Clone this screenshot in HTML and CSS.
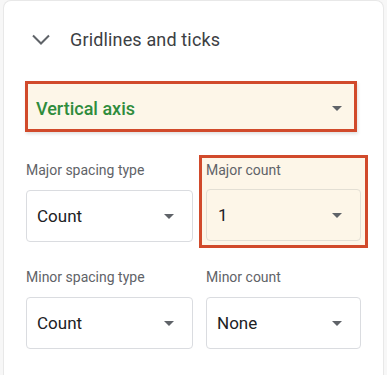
FILE: index.html
```html
<!DOCTYPE html>
<html lang="en">
<head>
    <meta charset="UTF-8">
    <title>Gridlines and ticks</title>
    <link rel="stylesheet" href="styles.css">
</head>
<body>
    <div class="card">
        <div class="header">
            <svg class="chevron" width="18" height="11" viewBox="0 0 18 11">
                <polyline points="1,1.5 9,9.5 17,1.5" fill="none" stroke="#5f6368" stroke-width="2"/>
            </svg>
            <span class="title">Gridlines and ticks</span>
        </div>

        <div class="axis-select">
            <span class="axis-label">Vertical axis</span>
            <span class="arrow"></span>
        </div>

        <div class="fields">
            <div class="field">
                <div class="label">Major spacing type</div>
                <div class="select">
                    <span>Count</span>
                    <span class="arrow"></span>
                </div>
            </div>
            <div class="field highlight">
                <div class="label">Major count</div>
                <div class="select">
                    <span>1</span>
                    <span class="arrow"></span>
                </div>
            </div>
            <div class="field">
                <div class="label">Minor spacing type</div>
                <div class="select">
                    <span>Count</span>
                    <span class="arrow"></span>
                </div>
            </div>
            <div class="field">
                <div class="label">Minor count</div>
                <div class="select">
                    <span>None</span>
                    <span class="arrow"></span>
                </div>
            </div>
        </div>
    </div>
</body>
</html>
```

FILE: styles.css
```css
* {
    margin: 0;
    padding: 0;
    box-sizing: border-box;
}

body {
    font-family: Roboto, 'Liberation Sans', Arial, sans-serif;
    background: #f7f7f7;
    overflow: hidden;
}

.card {
    margin-left: 3px;
    width: 381px;
    height: 100vh;
    background: #fff;
    border: 1px solid #e8e8e8;
    border-bottom: none;
    border-radius: 8px 8px 0 0;
}

.header {
    display: flex;
    align-items: center;
    height: 76px;
    padding-left: 28px;
}

.chevron {
    display: block;
    margin-right: 20px;
}

.title {
    font-size: 18px;
    color: #3c4043;
    letter-spacing: 0.15px;
}

.axis-select {
    display: flex;
    align-items: center;
    justify-content: space-between;
    margin: 4px 0 0 21px;
    width: 332px;
    height: 51px;
    border: 3px solid #d14a2b;
    background: #fdf6e8;
    padding: 3px 12px 0 8px;
    box-shadow: 1px 2px 3px rgba(0, 0, 0, 0.12);
}

.axis-label {
    color: #2f8c3c;
    font-size: 18px;
    font-weight: 500;
}

.arrow {
    width: 0;
    height: 0;
    border-left: 5px solid transparent;
    border-right: 5px solid transparent;
    border-top: 5px solid #5f6368;
}

.fields {
    display: grid;
    grid-template-columns: 167px 155px;
    column-gap: 13px;
    row-gap: 25px;
    align-items: start;
    margin-top: 28px;
    padding-left: 22px;
}

.label {
    height: 20px;
    line-height: 20px;
    font-size: 14px;
    color: #5f6368;
}

.select {
    display: flex;
    align-items: center;
    justify-content: space-between;
    height: 52px;
    margin-top: 10px;
    border: 1px solid #dadce0;
    border-radius: 4px;
    padding: 0 18px 0 10px;
    font-size: 17px;
    color: #202124;
    background: #fff;
}

.highlight {
    margin: -5px -7px -6px -7px;
    border: 3px solid #d14a2b;
    background: #fdf6e8;
    padding: 2px 4px 4px 4px;
}

.highlight .select {
    margin-top: 9px;
    background: #fdf6e8;
    border-color: #e3dfd4;
    padding-left: 11px;
}
```
